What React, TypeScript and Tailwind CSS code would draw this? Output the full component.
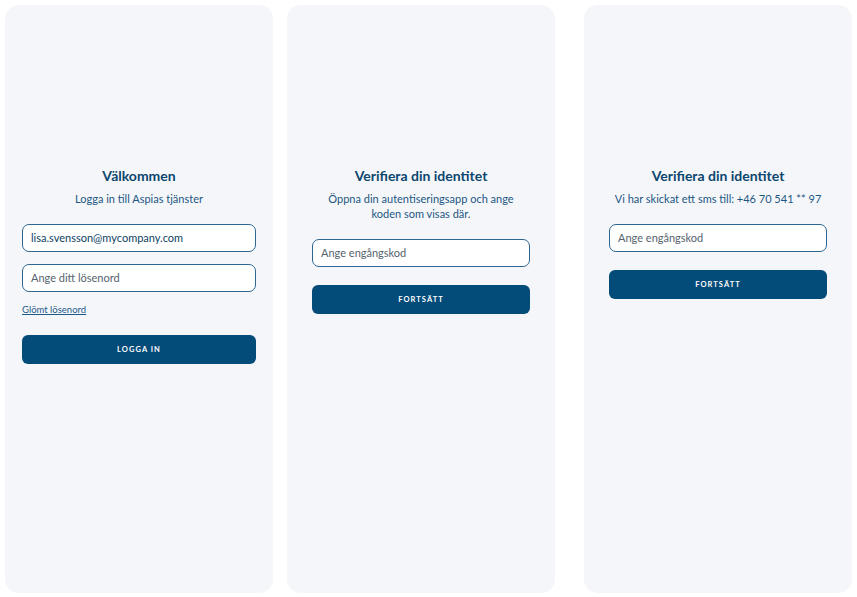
import React from "react";

const font = { fontFamily: "Lato, 'Open Sans', sans-serif" };

function Field({ value, placeholder }: { value?: string; placeholder?: string }) {
  return (
    <div className="h-[28px] rounded-[7px] border border-[#2d6690] bg-white px-[8px] flex items-center text-[11px]">
      {value ? (
        <span className="text-[#0d3f63]">{value}</span>
      ) : (
        <span className="text-[#56636e]">{placeholder}</span>
      )}
    </div>
  );
}

function PrimaryButton({ label }: { label: string }) {
  return (
    <button className="h-[29px] w-full rounded-[6px] bg-[#034b79] text-white text-[7.5px] font-bold tracking-[0.14em]">
      {label}
    </button>
  );
}

function Heading({ title, children }: { title: string; children: React.ReactNode }) {
  return (
    <div className="flex flex-col items-center text-center">
      <h2 className="text-[14px] leading-[16px] font-bold text-[#0b466e]">{title}</h2>
      <p className="mt-[7px] text-[11px] leading-[15px] text-[#1c5682]">{children}</p>
    </div>
  );
}

function Card({ className, children }: { className?: string; children: React.ReactNode }) {
  return (
    <div className={`w-[268px] h-[588px] rounded-[14px] bg-[#f5f6fa] pt-[163px] ${className ?? ""}`}>
      {children}
    </div>
  );
}

export default function App() {
  return (
    <div className="w-[857px] h-[597px] bg-white flex pt-[5px] pl-[5px]" style={font}>
      {/* Sign in */}
      <Card className="px-[17px]">
        <Heading title="Välkommen">Logga in till Aspias tjänster</Heading>
        <div className="mt-[18px] flex flex-col gap-[12px]">
          <Field value="lisa.svensson@mycompany.com" />
          <Field placeholder="Ange ditt lösenord" />
        </div>
        <a className="mt-[12px] block text-[9.5px] leading-[12px] text-[#1d5a88] underline">Glömt lösenord</a>
        <div className="mt-[18px]">
          <PrimaryButton label="LOGGA IN" />
        </div>
      </Card>

      {/* Authenticator app code */}
      <Card className="ml-[14px] px-[25px]">
        <Heading title="Verifiera din identitet">
          Öppna din autentiseringsapp och ange
          <br />
          koden som visas där.
        </Heading>
        <div className="mt-[18px]">
          <Field placeholder="Ange engångskod" />
        </div>
        <div className="mt-[17px]">
          <PrimaryButton label="FORTSÄTT" />
        </div>
      </Card>

      {/* SMS code */}
      <Card className="ml-[29px] px-[25px]">
        <Heading title="Verifiera din identitet">Vi har skickat ett sms till: +46 70 541 ** 97</Heading>
        <div className="mt-[18px]">
          <Field placeholder="Ange engångskod" />
        </div>
        <div className="mt-[17px]">
          <PrimaryButton label="FORTSÄTT" />
        </div>
      </Card>
    </div>
  );
}
